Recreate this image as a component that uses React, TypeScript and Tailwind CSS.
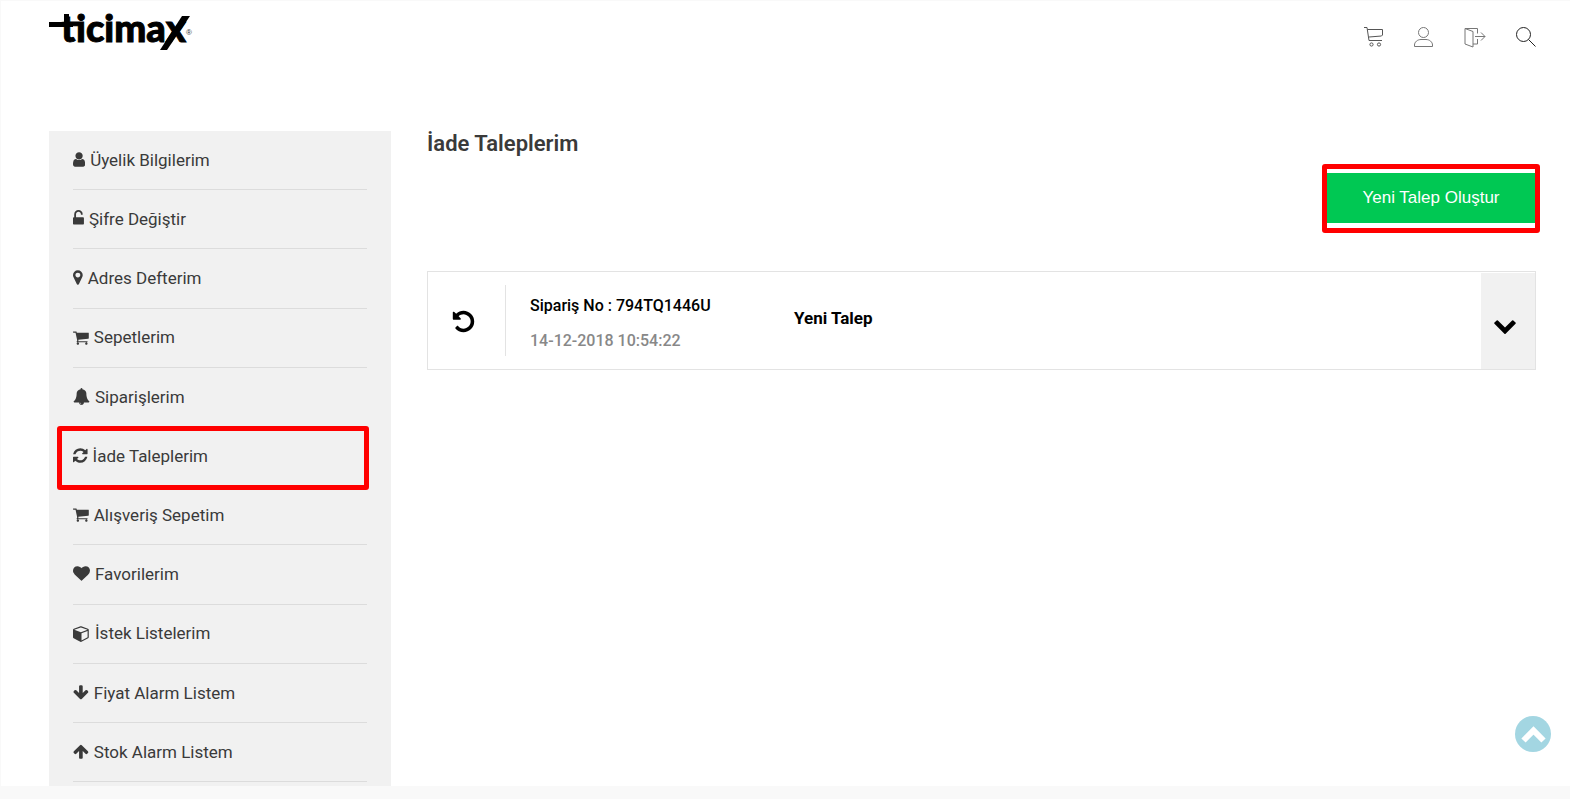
import { ReactNode } from "react"

interface MenuItem {
  label: string
  viewBox: string
  path: string
  active?: boolean
}

const CART_PATH =
  "M704 1536q0 52-38 90t-90 38-90-38-38-90 38-90 90-38 90 38 38 90zm896 0q0 52-38 90t-90 38-90-38-38-90 38-90 90-38 90 38 38 90zm128-1088v512q0 24-16.5 42.5t-40.5 21.5l-1044 122q13 60 13 70 0 16-24 64h920q26 0 45 19t19 45-19 45-45 19h-1024q-26 0-45-19t-19-45q0-11 8-31.5t16-36 21.5-40 15.5-29.5l-177-823h-204q-26 0-45-19t-19-45 19-45 45-19h256q16 0 28.5 6.5t19.5 15.5 13 24.5 8 26 5.5 29.5 4.5 26h1201q26 0 45 19t19 45z"

const menuItems: MenuItem[] = [
  {
    label: "Üyelik Bilgilerim",
    viewBox: "256 0 1280 1792",
    path: "M1536 1399q0 109-62.5 187t-150.5 78h-854q-88 0-150.5-78t-62.5-187q0-85 8.5-160.5t31.5-152 58.5-131 94-89 134.5-34.5q131 128 313 128t313-128q76 0 134.5 34.5t94 89 58.5 131 31.5 152 8.5 160.5zm-256-887q0 159-112.5 271.5t-271.5 112.5-271.5-112.5-112.5-271.5 112.5-271.5 271.5-112.5 271.5 112.5 112.5 271.5z",
  },
  {
    label: "Şifre Değiştir",
    viewBox: "320 0 1152 1792",
    path: "M1376 768q40 0 68 28t28 68v576q0 40-28 68t-68 28h-960q-40 0-68-28t-28-68v-576q0-40 28-68t68-28h32v-320q0-185 131.5-316.5t316.5-131.5 316.5 131.5 131.5 316.5q0 26-19 45t-45 19h-64q-26 0-45-19t-19-45q0-106-75-181t-181-75-181 75-75 181v320h736z",
  },
  {
    label: "Adres Defterim",
    viewBox: "384 0 1024 1792",
    path: "M1152 640q0-106-75-181t-181-75-181 75-75 181 75 181 181 75 181-75 75-181zm256 0q0 109-33 179l-364 774q-16 33-47.5 52t-67.5 19-67.5-19-46.5-52l-365-774q-33-70-33-179 0-212 150-362t362-150 362 150 150 362z",
  },
  { label: "Sepetlerim", viewBox: "64 0 1664 1792", path: CART_PATH },
  {
    label: "Siparişlerim",
    viewBox: "0 0 1792 1792",
    path: "M912 1696q0-16-16-16-59 0-101.5-42.5t-42.5-101.5q0-16-16-16t-16 16q0 73 51.5 124.5t124.5 51.5q16 0 16-16zm816-288q0 52-38 90t-90 38h-448q0 106-75 181t-181 75-181-75-75-181h-448q-52 0-90-38t-38-90q50-42 91-88t85-119.5 74.5-158.5 50-206 19.5-260q0-152 117-282.5t307-158.5q-8-19-8-39 0-40 28-68t68-28 68 28 28 68q0 20-8 39 190 28 307 158.5t117 282.5q0 139 19.5 260t50 206 74.5 158.5 85 119.5 91 88z",
  },
  {
    label: "İade Taleplerim",
    viewBox: "128 0 1536 1792",
    path: "M1639 1056q0 5-1 7-64 268-268 434.5t-478 166.5q-146 0-282.5-55t-243.5-157l-129 129q-19 19-45 19t-45-19-19-45v-448q0-26 19-45t45-19h448q26 0 45 19t19 45-19 45l-137 137q71 66 161 102t187 36q134 0 250-65t186-179q11-17 53-117 8-23 30-23h192q13 0 22.5 9.5t9.5 22.5zm25-800v448q0 26-19 45t-45 19h-448q-26 0-45-19t-19-45 19-45l138-138q-148-137-349-137-134 0-250 65t-186 179q-11 17-53 117-8 23-30 23h-199q-13 0-22.5-9.5t-9.5-22.5v-7q65-268 270-434.5t480-166.5q146 0 284 55.5t245 156.5l130-129q19-19 45-19t45 19 19 45z",
    active: true,
  },
  { label: "Alışveriş Sepetim", viewBox: "64 0 1664 1792", path: CART_PATH },
  {
    label: "Favorilerim",
    viewBox: "0 0 1792 1792",
    path: "M896 1664q-26 0-44-18l-624-602q-10-8-27.5-26t-55.5-65.5-68-97.5-53.5-121-23.5-138q0-220 127-344t351-124q62 0 126.5 21.5t120 58 95.5 68.5 76 68q36-36 76-68t95.5-68.5 120-58 126.5-21.5q224 0 351 124t127 344q0 221-229 450l-623 600q-18 18-44 18z",
  },
  {
    label: "İstek Listelerim",
    viewBox: "0 0 1792 1792",
    path: "M896 1629l640-349v-636l-640 233v752zm-64-865l698-254-698-254-698 254zm832-252v768q0 35-18 65t-49 47l-704 384q-28 16-61 16t-61-16l-704-384q-31-17-49-47t-18-65v-768q0-40 23-73t61-47l704-256q22-8 44-8t44 8l704 256q38 14 61 47t23 73z",
  },
  {
    label: "Fiyat Alarm Listem",
    viewBox: "64 0 1664 1792",
    path: "M1675 832q0 53-37 90l-651 652q-39 37-91 37-53 0-90-37l-651-652q-38-36-38-90 0-53 38-91l74-75q39-37 91-37 53 0 90 37l294 294v-704q0-52 38-90t90-38h128q52 0 90 38t38 90v704l294-294q37-37 90-37 52 0 91 37l75 75q37 39 37 91z",
  },
  {
    label: "Stok Alarm Listem",
    viewBox: "64 0 1664 1792",
    path: "M1675 971q0 51-37 90l-75 75q-38 38-91 38-54 0-90-38l-294-293v704q0 52-37.5 84.5t-90.5 32.5h-128q-53 0-90.5-32.5t-37.5-84.5v-704l-294 293q-36 38-90 38t-90-38l-75-75q-38-38-38-90 0-53 38-91l651-651q35-37 90-37 54 0 91 37l651 651q37 39 37 91z",
  },
]

function Logo() {
  return (
    <a href="#" aria-label="ticimax">
      <svg width="150" height="60" viewBox="0 0 150 60" fill="#000" aria-hidden="true">
        <path d="M0 21h24v5H0zM15 13h5v12h-5z" />
        <path d="M133 15h8l-23 34h-7z" />
        <text
          x="12"
          y="41"
          fontFamily="Lato, sans-serif"
          fontWeight="900"
          fontSize="38"
          stroke="#000"
          strokeWidth="1"
        >
          ticimax
        </text>
        <text x="137" y="34" fontFamily="Liberation Sans, sans-serif" fontSize="8" fill="#333">
          ®
        </text>
      </svg>
    </a>
  )
}

function HeaderLink({ label, children }: { label: string; children: ReactNode }) {
  return (
    <a href="#" aria-label={label} className="block">
      {children}
    </a>
  )
}

function Header() {
  return (
    <header className="flex h-[130px] items-start justify-between">
      <Logo />
      <nav className="flex gap-[30px] pt-[25px]" aria-label="Hesap">
        <HeaderLink label="Sepet">
          <svg width="20" height="22" viewBox="0 0 20 22" fill="none" stroke="#555" strokeWidth="1">
            <path d="M0 1.5h3L5 14.5M3.5 3.5h15v5.5L17.5 10 5 11M5 14.5h13" />
            <circle cx="7.5" cy="18.5" r="1.6" />
            <circle cx="15" cy="18.5" r="1.6" />
          </svg>
        </HeaderLink>
        <HeaderLink label="Üyelik">
          <svg width="20" height="22" viewBox="0 0 20 22" fill="none" stroke="#777" strokeWidth="1">
            <circle cx="9.5" cy="6.5" r="5" />
            <path d="M.5 20.5V19c0-3 3-5.5 6.5-5.5h5c3.5 0 6.500 2.5 6.5 5.5v1.5z" />
          </svg>
        </HeaderLink>
        <HeaderLink label="Çıkış">
          <svg width="22" height="22" viewBox="0 0 22 22" fill="none" stroke="#777" strokeWidth="1">
            <path d="M1 2.500l8 3v15.500l-8-3zM1 2.500h12.500v5M13.500 13v5H9M11 10.500h10M17 6.500l4 4-4 4" />
          </svg>
        </HeaderLink>
        <HeaderLink label="Ara">
          <svg width="20" height="22" viewBox="0 0 20 22" fill="none" stroke="#222" strokeWidth="1">
            <circle cx="7.5" cy="8.5" r="7" />
            <path d="M12.5 13.5l7 7" />
          </svg>
        </HeaderLink>
      </nav>
    </header>
  )
}

function Sidebar() {
  return (
    <aside className="flex w-[342px] shrink-0 flex-col bg-[#f1f1f1] pr-6 pb-1 pl-6">
      <ul className="flex flex-1 flex-col">
        {menuItems.map((item) => (
          <li key={item.label} className="relative flex min-h-[50px] flex-1 border-b border-[#dcdcdc]">
            <a href="#" className="flex flex-1 items-center gap-[5px] pt-px text-[17px] text-[#3a3a3a]">
              <svg className="mb-0.5 h-[17px] w-auto" viewBox={item.viewBox} fill="#3a3a3a" aria-hidden="true">
                <path d={item.path} />
              </svg>
              {item.label}
            </a>
            {item.active && (
              <span className="pointer-events-none absolute -top-px -right-[2px] -bottom-[5px] -left-4 z-10 rounded-[3px] border-5 border-[#ff0000]" />
            )}
          </li>
        ))}
      </ul>
    </aside>
  )
}

function RequestCard() {
  return (
    <article className="mt-12 flex h-[99px] border border-[#e3e3e3] text-black">
      <div className="my-[13px] flex w-[78px] items-center justify-center border-r border-[#e3e3e3] pt-0.5 pr-1.5">
        <svg className="size-[25px]" viewBox="0 0 1792 1792" aria-hidden="true">
          <path d="M1664 896q0 156-61 298t-164 245-245 164-298 61q-172 0-327-72.5t-264-204.5q-7-10-6.5-22.5t8.5-20.5l137-138q10-9 25-9 16 2 23 12 73 95 179 147t225 52q104 0 198.5-40.5t163.5-109.500 109.500-163.500 40.500-198.500-40.500-198.500-109.500-163.500-163.500-109.500-198.500-40.500q-98 0-188 35.500t-160 101.500l137 138q31 30 14 69-17 40-59 40h-448q-26 0-45-19t-19-45v-448q0-42 40-59 39-17 69 14l130 129q107-101 244.500-156.500t284.500-55.500q156 0 298 61t245 164 164 245 61 298z" />
        </svg>
      </div>
      <div className="flex w-[288px] flex-col gap-[11px] pt-[22px] pl-6 text-base leading-6 font-medium">
        <p>Sipariş No : 794TQ1446U</p>
        <p className="text-[#888]">14-12-2018 10:54:22</p>
      </div>
      <p className="flex-1 pt-[34px] text-[17px] leading-6 font-bold">Yeni Talep</p>
      <button
        type="button"
        aria-label="Detay"
        className="mt-px flex w-[54px] items-center justify-center bg-[#f1f1f1] pt-2 pr-1.5"
      >
        <svg className="size-6" viewBox="0 0 1792 1792" aria-hidden="true">
          <path d="M1683 808l-742 741q-19 19-45 19t-45-19l-742-741q-19-19-19-45.500t19-45.500l166-165q19-19 45-19t45 19l531 531 531-531q19-19 45-19t45 19l166 165q19 19 19 45.500t-19 45.500z" />
        </svg>
      </button>
    </article>
  )
}

export default function App() {
  return (
    <div className="flex min-h-screen flex-col border-t border-[#f9f9f9] bg-white font-[Roboto,sans-serif]">
      <div className="flex flex-1 flex-col border-l border-[#f9f9f9] pr-[34px] pl-12">
        <Header />
        <div className="flex flex-1 gap-9">
          <Sidebar />
          <main className="min-w-0 flex-1 pt-px">
            <h1 className="text-[22px] leading-6 font-semibold text-[#3a3a3a]">İade Taleplerim</h1>
            <div className="mt-[17px] flex justify-end">
              <div className="relative">
                <button
                  type="button"
                  className="block h-[50px] w-[210px] bg-[#00c853] font-['Liberation_Sans',sans-serif] text-[17px] text-white"
                >
                  Yeni Talep Oluştur
                </button>
                <span className="pointer-events-none absolute -top-[9px] -right-1 -bottom-[10px] -left-1 rounded-[3px] border-5 border-[#ff0000]" />
              </div>
            </div>
            <RequestCard />
          </main>
        </div>
      </div>
      <footer className="h-[13px] bg-[#f9f9f9]" />
      <button
        type="button"
        aria-label="Yukarı çık"
        className="fixed right-[19px] bottom-[47px] flex size-9 items-center justify-center rounded-full bg-[#a3d6e2]"
      >
        <svg width="25" height="17" viewBox="0 0 25 17" fill="none" stroke="#fff" strokeWidth="6" aria-hidden="true">
          <path d="M2.500 14.500L12.500 4.500l10 10" />
        </svg>
      </button>
    </div>
  )
}
